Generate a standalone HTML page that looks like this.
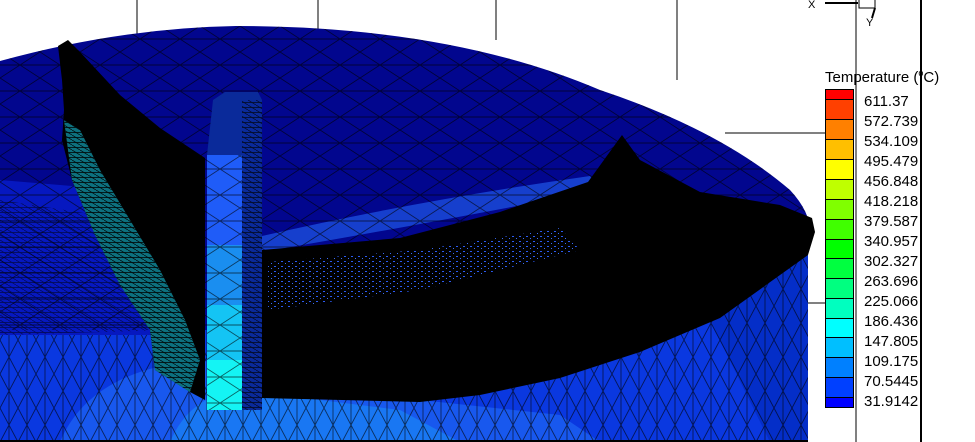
<!DOCTYPE html>
<html><head><meta charset="utf-8"><style>
html,body{margin:0;padding:0;background:#fff;}
body{width:975px;height:442px;overflow:hidden;position:relative;font-family:"Liberation Sans",sans-serif;}
svg{position:absolute;left:0;top:0;}
.lb{position:absolute;left:864px;font-size:15px;color:#000;line-height:20px;}
</style></head><body>
<svg width="975" height="442" viewBox="0 0 975 442">
<defs>
<pattern id="mesh" width="40" height="26" patternUnits="userSpaceOnUse">
<path d="M0 0L40 26M40 0L0 26M0 13H40" stroke="#000" stroke-width="0.9" fill="none" opacity="0.6"/>
</pattern>
<pattern id="vmesh" width="18" height="34" patternUnits="userSpaceOnUse">
<path d="M0 0L18 34M18 0L0 34M9 0V34" stroke="#000" stroke-width="0.9" fill="none" opacity="0.6"/>
</pattern>
<pattern id="dense" width="8" height="5" patternUnits="userSpaceOnUse">
<path d="M0 0L8 5M0 2.5H8" stroke="#000" stroke-width="0.7" fill="none"/>
</pattern>
<pattern id="speck" width="7" height="5" patternUnits="userSpaceOnUse">
<rect width="7" height="5" fill="#000"/>
<rect x="1" y="1" width="2" height="1" fill="#2a5af0"/>
<rect x="5" y="3" width="1" height="1" fill="#3a6af8"/>
</pattern>
</defs>
<!-- axes lines -->
<g stroke="#000" stroke-width="1">
<line x1="137" y1="0" x2="137" y2="60"/>
<line x1="318" y1="0" x2="318" y2="30"/>
<line x1="496" y1="0" x2="496" y2="40"/>
<line x1="677" y1="0" x2="677" y2="80"/>
<line x1="856" y1="0" x2="856" y2="442"/>
<line x1="921" y1="0" x2="921" y2="442" stroke-width="2"/>
<line x1="725" y1="133" x2="825" y2="133"/>
<line x1="808" y1="303" x2="825" y2="303"/>
<line x1="825" y1="3" x2="858" y2="3" stroke-width="2"/>
<path d="M859 0V8H875V0" fill="none"/>
<line x1="875" y1="8" x2="872" y2="18" stroke-width="2"/>
</g>
<text x="808" y="8" font-size="11" font-family="Liberation Sans">X</text>
<text x="866" y="26" font-size="11" font-family="Liberation Sans">Y</text>
<!-- cylinder lower side -->
<path d="M0 300 L0 442 L808 442 L808 240 L600 300 L262 330 Z" fill="#0a38e0"/>
<path d="M60 442 Q90 370 200 360 L420 400 L560 415 L600 442 Z" fill="#1a5cf0" opacity="0.9"/>
<path d="M170 442 Q190 395 240 390 L400 410 L460 442 Z" fill="#1a80f4" opacity="0.8"/>
<path d="M700 300 L808 250 L808 442 L770 442 Z" fill="#0028b8" opacity="0.6"/>
<path d="M0 300 L0 442 L808 442 L808 240 L600 300 L262 330 Z" fill="url(#vmesh)"/>
<!-- top surface -->
<path d="M0 61 Q120 28 236 26 Q450 26 600 90 Q720 130 790 190 Q818 220 808 250 L600 300 L262 330 L0 330 Z" fill="#02068e"/>
<path d="M0 180 L120 190 L200 230 L200 335 L0 335 Z" fill="#0618c0"/>
<path d="M262 236 Q420 200 590 176 L600 190 Q420 225 262 252 Z" fill="#1a4ad8" opacity="0.85"/>
<path d="M0 61 Q120 28 236 26 Q450 26 600 90 Q720 130 790 190 Q818 220 808 250 L600 300 L262 330 L0 330 Z" fill="url(#mesh)"/>
<path d="M0 200 L130 220 L170 330 L0 335 Z" fill="url(#dense)" opacity="0.6"/>
<!-- black mass -->
<path d="M262 250 L400 238 L500 212 L588 182 L622 135 L640 160 L700 192 L780 205 L812 218 L815 232 L808 255 L720 318 L640 352 L560 378 L480 395 L420 402 L262 398 Z" fill="#000"/>
<path d="M268 262 L420 250 L560 228 L580 250 L420 290 L268 310 Z" fill="url(#speck)"/>
<!-- left crescent -->
<path d="M58 46 L68 40 L80 52 L120 95 L160 128 L205 158 L205 400 L190 392 L155 370 L150 330 L120 285 L95 235 L72 180 L62 140 L64 110 L62 80 Z" fill="#000"/>
<path d="M64 120 L72 180 L95 235 L120 285 L150 330 L155 370 L190 392 L200 360 L185 320 L160 270 L130 220 L100 170 L80 130 Z" fill="#12a0b4" opacity="0.7"/>
<path d="M64 120 L72 180 L95 235 L120 285 L150 330 L155 370 L190 392 L200 360 L185 320 L160 270 L130 220 L100 170 L80 130 Z" fill="url(#dense)"/>
<!-- blade -->
<path d="M213 100 L225 92 L258 92 L262 100 L262 410 L242 410 L242 155 L207 155 Z" fill="#0a2a9a"/>
<rect x="207" y="155" width="35" height="90" fill="#1f5cf8"/>
<rect x="207" y="245" width="35" height="60" fill="#1a8ef0"/>
<rect x="207" y="305" width="35" height="55" fill="#14c4f4"/>
<rect x="207" y="360" width="35" height="50" fill="#14f4f4"/>
<rect x="207" y="155" width="35" height="255" fill="url(#mesh)"/>
<rect x="242" y="100" width="20" height="310" fill="url(#dense)" opacity="0.8"/>
<rect x="0" y="440" width="808" height="2" fill="#000"/>
<!-- legend bar -->
<g stroke="#000" stroke-width="1">
<rect x="825.5" y="89.5" width="28" height="10" fill="#ff0000"/>
<rect x="825.5" y="99.5" width="28" height="20" fill="#ff4000"/>
<rect x="825.5" y="119.5" width="28" height="20" fill="#ff8000"/>
<rect x="825.5" y="139.5" width="28" height="20" fill="#ffbf00"/>
<rect x="825.5" y="159.5" width="28" height="20" fill="#ffff00"/>
<rect x="825.5" y="179.5" width="28" height="20" fill="#bfff00"/>
<rect x="825.5" y="199.5" width="28" height="20" fill="#80ff00"/>
<rect x="825.5" y="219.5" width="28" height="20" fill="#40ff00"/>
<rect x="825.5" y="239.5" width="28" height="19" fill="#00ff00"/>
<rect x="825.5" y="258.5" width="28" height="20" fill="#00ff40"/>
<rect x="825.5" y="278.5" width="28" height="20" fill="#00ff80"/>
<rect x="825.5" y="298.5" width="28" height="20" fill="#00ffbf"/>
<rect x="825.5" y="318.5" width="28" height="19" fill="#00ffff"/>
<rect x="825.5" y="337.5" width="28" height="20" fill="#00bfff"/>
<rect x="825.5" y="357.5" width="28" height="20" fill="#0080ff"/>
<rect x="825.5" y="377.5" width="28" height="20" fill="#0040ff"/>
<rect x="825.5" y="397.5" width="28" height="10" fill="#0000ff"/>
</g>
</svg>
<div style="position:absolute;left:825px;top:68px;font-size:15px;">Temperature (<sup style="font-size:9px">o</sup>C)</div>
<div class="lb" style="top:92px">611.37<br>572.739<br>534.109<br>495.479<br>456.848<br>418.218<br>379.587<br>340.957<br>302.327<br>263.696<br>225.066<br>186.436<br>147.805<br>109.175<br>70.5445<br>31.9142</div>
</body></html>
